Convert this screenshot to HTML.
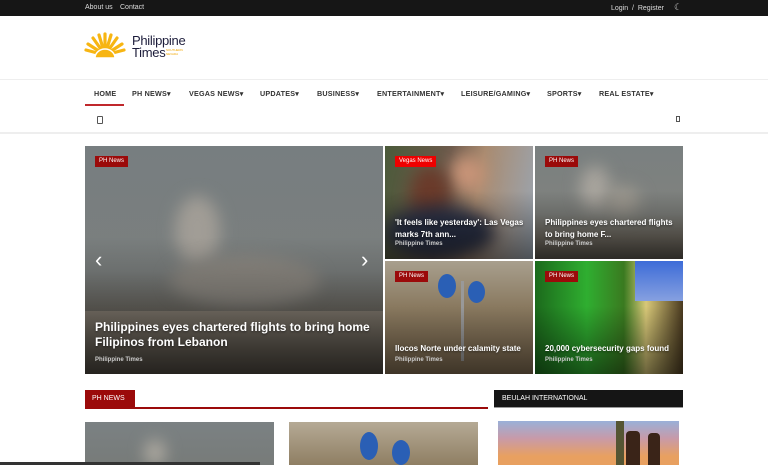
<!DOCTYPE html>
<html><head><meta charset="utf-8"><style>
*{margin:0;padding:0;box-sizing:border-box}
body{width:768px;height:465px;overflow:hidden;background:#fff;font-family:"Liberation Sans",Arial,sans-serif;position:relative}
.a{position:absolute}
.top{left:0;top:0;width:768px;height:16px;background:#161616;color:#ddd;font-size:7px;line-height:12px}
.nav a{position:absolute;top:89px;font-size:7.2px;font-weight:bold;color:#333;letter-spacing:.2px}
.tile{overflow:hidden}
.tag{position:absolute;left:10px;top:10px;background:#9b0a0a;color:#fff;font-size:6px;padding:2px 4px;line-height:7px}
.ttl{position:absolute;left:10px;color:#fff;font-weight:bold;font-size:8px;line-height:12px;text-shadow:0 1px 2px rgba(0,0,0,.5)}
.by{position:absolute;left:10px;color:#ccc;font-size:6px;font-weight:bold}
.shade{position:absolute;left:0;right:0;bottom:0;height:60%;background:linear-gradient(transparent,rgba(0,0,0,.5))}
.blob{position:absolute;border-radius:50%;filter:blur(8px)}
</style></head><body>
<div class="a top">
<span class="a" style="left:85px;top:2px">About us</span>
<span class="a" style="left:120px;top:2px">Contact</span>
<span class="a" style="left:611px;top:3px">Login &nbsp;/ &nbsp;Register</span>
<span class="a" style="left:674px;top:1px;font-size:9px;color:#ccc">&#9790;</span>
</div>
<svg class="a" style="left:84px;top:31px" width="44" height="30" viewBox="0 0 44 30">
<g stroke="#f7b512" stroke-width="3.2" stroke-linecap="round" fill="none">
<line x1="21" y1="24" x2="21" y2="3"/>
<line x1="21" y1="24" x2="27" y2="4"/>
<line x1="21" y1="24" x2="15" y2="4"/>
<line x1="21" y1="24" x2="33" y2="7"/>
<line x1="21" y1="24" x2="9" y2="7"/>
<line x1="21" y1="24" x2="38" y2="13"/>
<line x1="21" y1="24" x2="4" y2="13"/>
<line x1="21" y1="24" x2="40" y2="19"/>
<line x1="21" y1="24" x2="2" y2="19"/>
</g>
<path d="M11 27 A10 9 0 0 1 31 27 Z" fill="#f7b512" stroke="#fff" stroke-width="1.5"/>
</svg>
<div class="a" style="left:132px;top:35px;font-size:13px;line-height:11.5px;color:#1c1c3a;letter-spacing:-.3px;font-weight:500">Philippine<br>Times</div>
<div class="a" style="left:166px;top:49px;font-size:3px;line-height:3.5px;color:#f0a500">SOUTHERN<br>NEVADA</div>
<div class="a" style="left:0;top:79px;width:768px;height:1px;background:#eee"></div>
<div class="nav">
<a style="left:94px">HOME</a>
<a style="left:132px">PH NEWS▾</a>
<a style="left:189px">VEGAS NEWS▾</a>
<a style="left:260px">UPDATES▾</a>
<a style="left:317px">BUSINESS▾</a>
<a style="left:377px">ENTERTAINMENT▾</a>
<a style="left:461px">LEISURE/GAMING▾</a>
<a style="left:547px">SPORTS▾</a>
<a style="left:599px">REAL ESTATE▾</a>
</div>
<div class="a" style="left:85px;top:104px;width:39px;height:1.5px;background:#c0282c"></div>
<div class="a" style="left:97px;top:116px;width:6px;height:8px;border:1px solid #555;border-radius:1px"></div>
<div class="a" style="left:676px;top:116px;width:4px;height:6px;border:1px solid #555"></div>
<div class="a" style="left:0;top:132px;width:768px;height:2px;background:#eee"></div>

<div class="a tile" style="left:85px;top:146px;width:298px;height:228px;background:linear-gradient(#777e80 0%,#7b7f7e 55%,#6a665e 75%,#4e4b45 100%)">
<div class="blob" style="left:90px;top:50px;width:45px;height:70px;background:#a19d96"></div>
<div class="blob" style="left:85px;top:110px;width:150px;height:50px;background:#8e8a83"></div>
<div class="a" style="left:0;top:165px;width:298px;height:63px;background:linear-gradient(#8c8478,#4b463e)"></div>
<div class="shade"></div>
<div class="tag">PH News</div>
<div class="ttl" style="top:174px;font-size:12px;line-height:15px">Philippines eyes chartered flights to bring home<br>Filipinos from Lebanon</div>
<div class="by" style="top:211px">Philippine Times</div>
<div class="a" style="left:10px;top:104px;color:#fff;font-size:22px;line-height:20px">&#8249;</div>
<div class="a" style="left:276px;top:104px;color:#fff;font-size:22px;line-height:20px">&#8250;</div>
</div>

<div class="a tile" style="left:385px;top:146px;width:148px;height:113px;background:linear-gradient(100deg,#4b5a3a,#6d5a4c 40%,#a98b70 60%,#9aa6b3)">
<div class="blob" style="left:65px;top:10px;width:35px;height:35px;background:#c89478"></div>
<div class="blob" style="left:25px;top:20px;width:40px;height:60px;background:#6a3a2a"></div>
<div class="blob" style="left:0;top:60px;width:110px;height:53px;background:#2b3248"></div>
<div class="shade"></div>
<div class="tag" style="background:#e00">Vegas News</div>
<div class="ttl" style="top:71px">'It feels like yesterday': Las Vegas<br>marks 7th ann...</div>
<div class="by" style="top:95px">Philippine Times</div>
</div>

<div class="a tile" style="left:535px;top:146px;width:148px;height:113px;background:linear-gradient(#7a8080,#80827e 60%,#777268 80%,#5a554c)">
<div class="blob" style="left:45px;top:20px;width:30px;height:45px;background:#a9a59e"></div>
<div class="blob" style="left:70px;top:40px;width:35px;height:30px;background:#9c988f"></div>
<div class="shade"></div>
<div class="tag">PH News</div>
<div class="ttl" style="top:71px">Philippines eyes chartered flights<br>to bring home F...</div>
<div class="by" style="top:95px">Philippine Times</div>
</div>

<div class="a tile" style="left:385px;top:261px;width:148px;height:113px;background:linear-gradient(#a89f8e,#8a7a60 40%,#7d6a50)">
<div class="a" style="left:76px;top:20px;width:3px;height:80px;background:#999"></div>
<div class="a" style="left:53px;top:13px;width:18px;height:24px;border-radius:50%;background:#2a5fb5"></div>
<div class="a" style="left:83px;top:20px;width:17px;height:22px;border-radius:50%;background:#2a5fb5"></div>
<div class="shade"></div>
<div class="tag">PH News</div>
<div class="ttl" style="top:82px">Ilocos Norte under calamity state</div>
<div class="by" style="top:96px">Philippine Times</div>
</div>

<div class="a tile" style="left:535px;top:261px;width:148px;height:113px;background:linear-gradient(90deg,#1c6a1c,#2fae30 35%,#3a7a20 60%,#d8c878 75%,#4a3a20)">
<div class="a" style="left:100px;top:0;width:48px;height:40px;background:linear-gradient(#3d6cd8,#86a0e0)"></div>
<div class="shade"></div>
<div class="tag">PH News</div>
<div class="ttl" style="top:82px">20,000 cybersecurity gaps found</div>
<div class="by" style="top:96px">Philippine Times</div>
</div>

<div class="a" style="left:85px;top:390px;width:50px;height:18px;background:#9b0a0a;color:#fff;font-size:7px;line-height:18px;padding-left:7px">PH NEWS</div>
<div class="a" style="left:85px;top:407px;width:403px;height:1.5px;background:#9b0a0a"></div>
<div class="a" style="left:494px;top:390px;width:189px;height:18px;background:#151515;color:#fff;font-size:7px;line-height:18px;padding-left:8px;border-bottom:1px solid #999">BEULAH INTERNATIONAL</div>

<div class="a" style="left:85px;top:422px;width:189px;height:43px;background:linear-gradient(#7b8183,#777b79)"><div class="blob" style="left:60px;top:18px;width:20px;height:25px;background:#b3aea4"></div></div>
<div class="a" style="left:289px;top:422px;width:189px;height:43px;background:linear-gradient(#b5aa95,#8f7f63)">
<div class="a" style="left:71px;top:10px;width:18px;height:28px;border-radius:50%;background:#2a5fb5"></div>
<div class="a" style="left:103px;top:18px;width:18px;height:25px;border-radius:50%;background:#2a5fb5"></div></div>
<div class="a" style="left:498px;top:421px;width:181px;height:44px;background:linear-gradient(#9ab0d8,#c89aa8 40%,#e8a060 80%)">
<div class="a" style="left:118px;top:0;width:8px;height:44px;background:#553"></div>
<div class="a" style="left:128px;top:10px;width:14px;height:34px;background:#3a2418;border-radius:4px 4px 0 0"></div>
<div class="a" style="left:150px;top:12px;width:12px;height:32px;background:#3a2418;border-radius:4px 4px 0 0"></div></div>
<div class="a" style="left:0;top:462px;width:260px;height:3px;background:#333"></div>
</body></html>
